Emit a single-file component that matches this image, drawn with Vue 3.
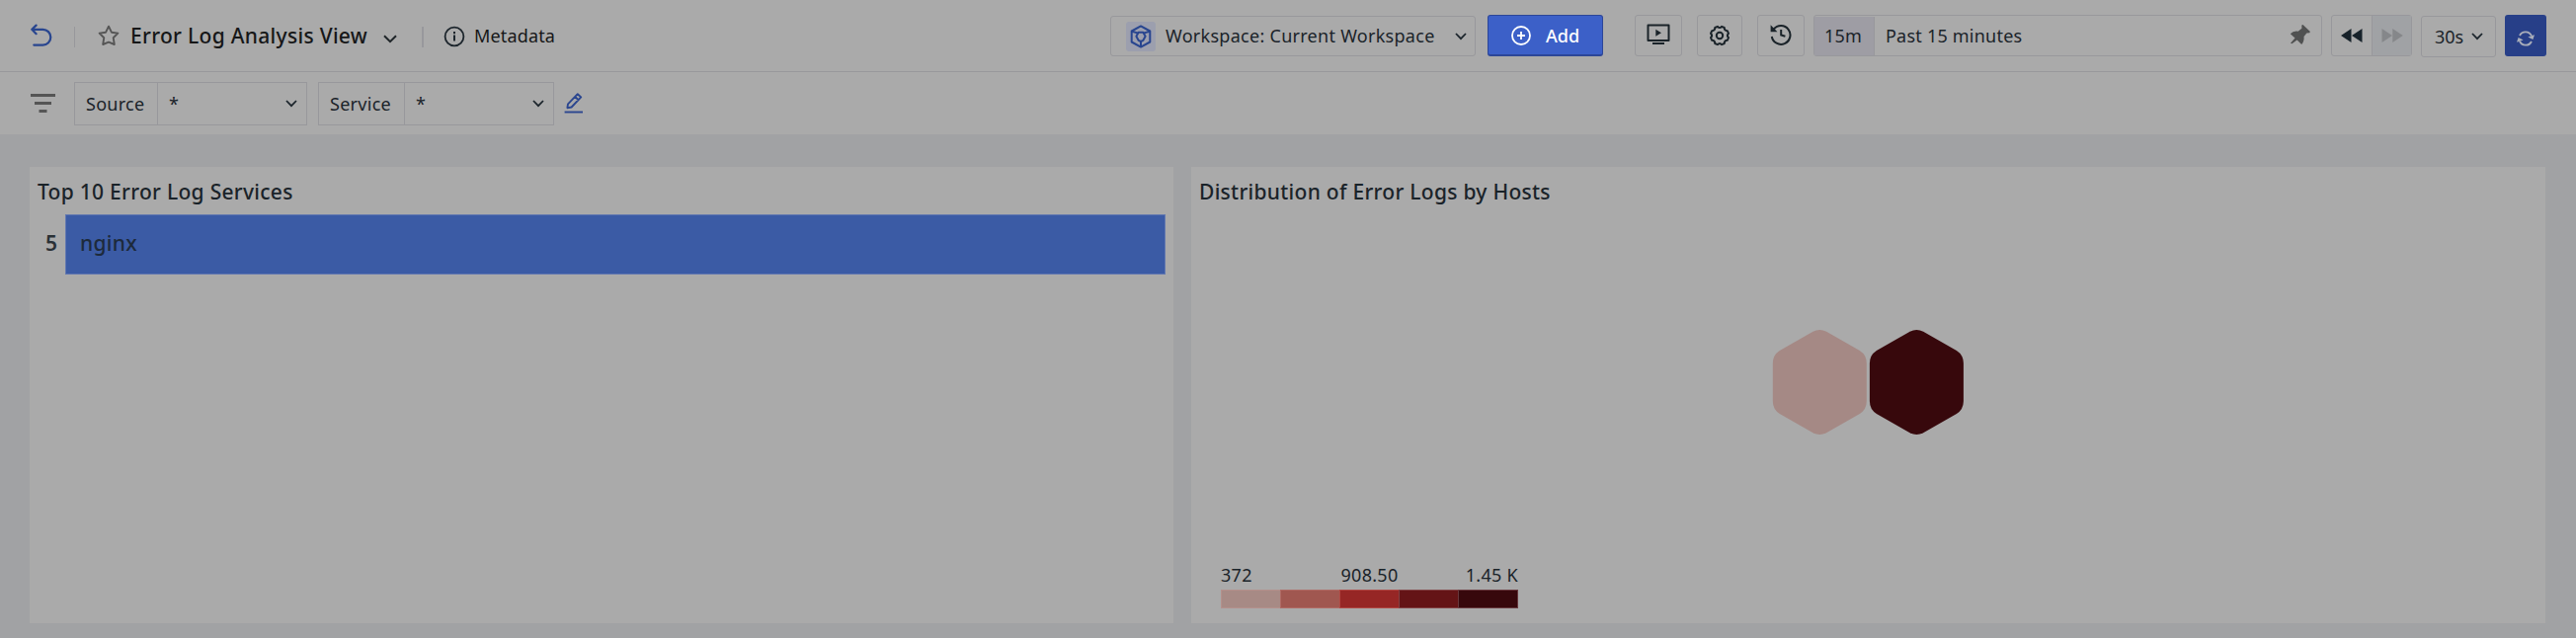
<script setup>
const legend = [
  { fill: '#a78a85', edge: '#b4908c' },
  { fill: '#a05750', edge: '#b06a64' },
  { fill: '#962625', edge: '#b04743' },
  { fill: '#641416', edge: '#814043' },
  { fill: '#37080c', edge: '#67383d' },
]
const filters = [
  { name: 'Source', value: '*', kind: 'source' },
  { name: 'Service', value: '*', kind: 'service' },
]
const services = [{ count: 5, name: 'nginx', share: 100 }]
const hex = 'M-6.8 -51.2 Q0 -54.6 6.8 -51.2 L40.5 -32 Q47.5 -27.5 47.5 -19 V19 Q47.5 27.5 40.5 32 L6.8 51.2 Q0 54.6 -6.8 51.2 L-40.5 32 Q-47.5 27.5 -47.5 19 V-19 Q-47.5 -27.5 -40.5 -32 Z'
</script>

<template>
  <div class="page">
    <header class="topbar">
      <svg class="undo" width="22" height="24" viewBox="0 0 22 24" fill="none" stroke="#28458f" stroke-width="2.2" stroke-linecap="round" stroke-linejoin="round">
        <path d="M5.6 1.6 1.3 5.8 5.6 10.2M1.8 5.8H12.4a7.9 7.9 0 0 1 0 15.8H3.3" />
      </svg>
      <i class="sep"></i>
      <svg class="star" width="22" height="22" viewBox="0 0 22 22" fill="none" stroke="#555" stroke-width="1.9" stroke-linejoin="round">
        <path d="M11 1.7 13.9 7.7 20.4 8.6 15.7 13.2 16.8 20 11 17.6 5.2 20 6.3 13.2 1.6 8.6 8.1 7.7Z" />
      </svg>
      <h1>Error Log Analysis View</h1>
      <svg class="title-chev" width="14" height="9" viewBox="0 0 14 9" fill="none" stroke="#1f2529" stroke-width="2"><path d="M1 1.2 7 7.2 13 1.2" /></svg>
      <i class="sep wide"></i>
      <svg class="info" width="22" height="22" viewBox="0 0 22 22" fill="none" stroke="#1c252c" stroke-width="1.8">
        <circle cx="11" cy="11" r="9.4" /><path d="M11 9.6V15.4M11 6V8.2" stroke-width="2" />
      </svg>
      <span class="meta">Metadata</span>

      <div class="workspace">
        <span class="cube">
          <svg width="22" height="24" viewBox="0 0 22 24" fill="none" stroke="#28458f" stroke-width="2" stroke-linejoin="round">
            <path d="M11 1.4 20.3 6.5V17.5L11 22.6 1.7 17.5V6.5Z" />
            <path d="M8.6 7.8H13.4L15.6 11.8 13.4 15.8 11 17 8.6 15.8 6.4 11.8Z" />
            <path d="M2 6.7 8.4 8.6M20 6.7 13.6 8.6M11 16.8V22.4" />
          </svg>
        </span>
        <span class="ws-text">Workspace: Current Workspace</span>
        <svg class="chev" width="12" height="8" viewBox="0 0 12 8" fill="none" stroke="#1c252c" stroke-width="1.8"><path d="M1 1 6 6.2 11 1" /></svg>
      </div>

      <button class="add">
        <svg width="20" height="20" viewBox="0 0 20 20" fill="none" stroke="#fff" stroke-width="1.8"><circle cx="10" cy="10" r="9" /><path d="M10 6V14M6 10H14" /></svg>
        <span>Add</span>
      </button>

      <button class="tool t1">
        <svg width="24" height="22" viewBox="0 0 24 22" fill="none" stroke="#1a2329" stroke-width="2" stroke-linejoin="round"><rect x="1.5" y="1.5" width="21" height="15.5" /><path d="M6 20H18" /><path d="M9.3 5.8V12.7L15 9.2Z" fill="#1a2329" stroke="none" /></svg>
      </button>
      <button class="tool t2">
        <svg width="22" height="22" viewBox="0 0 22 22" fill="none" stroke="#1a2329" stroke-width="2" stroke-linejoin="round">
          <path d="M9 1.8Q11 4.2 13 1.8L15.8 3Q15.6 6 18.8 6.2L20 9Q17.7 11 20 13L18.8 15.8Q15.6 16 15.8 19L13 20.2Q11 17.8 9 20.2L6.2 19Q6.4 16 3.2 15.8L2 13Q4.3 11 2 9L3.2 6.2Q6.4 6 6.2 3Z" />
          <circle cx="11" cy="11" r="3.2" />
        </svg>
      </button>
      <button class="tool t3">
        <svg width="22" height="22" viewBox="0 0 22 22" fill="none" stroke="#1a2329" stroke-width="2"><path d="M3.8 5.5A9.4 9.4 0 1 1 1.8 13" /><path d="M.6 1.3V8.2H7.5Z" fill="#1a2329" stroke="none" /><path d="M11.2 6V11.5L15.4 12.8" /></svg>
      </button>

      <div class="range">
        <span class="short">15m</span>
        <span class="past">Past 15 minutes</span>
        <svg class="pin" width="21" height="21" viewBox="0 0 21 21" fill="#505151"><path d="M12.3.6 13.5 0 20.9 7 20.2 8.3 17.4 8.5 14.5 12.1Q15.2 16.8 12.2 19.9L7.6 15.6 2.4 19.3 1 18.8 5.5 13.4.8 9.3Q3.7 6 8.6 6.7L12.4 3.7Z" /></svg>
      </div>

      <div class="steps">
        <span><svg width="22" height="14" viewBox="0 0 22 14" fill="#17222a"><path d="M10.5 0V14L0 7ZM21.5 0V14L11 7Z" /></svg></span>
        <span class="off"><svg width="22" height="14" viewBox="0 0 22 14" fill="#85878a"><path d="M.5 0V14L11 7ZM11.3 0V14L21.8 7Z" /></svg></span>
      </div>

      <div class="interval">
        <span>30s</span>
        <svg width="12" height="8" viewBox="0 0 12 8" fill="none" stroke="#1c252c" stroke-width="1.8"><path d="M1 1 6 6.2 11 1" /></svg>
      </div>

      <button class="refresh">
        <svg width="18" height="16" viewBox="0 0 18 16" fill="none" stroke="#a9aeba" stroke-width="1.9"><path d="M3 5A6.6 6.6 0 0 1 15 5.4M15 11A6.6 6.6 0 0 1 3 10.6" /><path d="M11.4 6.6 18 4.2 16.4 9ZM6.6 9.4 0 11.8 1.6 7Z" fill="#a9aeba" stroke="none" /></svg>
      </button>
    </header>

    <section class="filterbar">
      <svg class="funnel" width="25" height="19" viewBox="0 0 25 19" fill="#555"><path d="M0 0H25V3H0ZM4 8H21V11H4ZM8.5 16H16.5V19H8.5Z" /></svg>
      <div v-for="f in filters" :key="f.name" class="filter" :class="f.kind">
        <span class="fname">{{ f.name }}</span>
        <span class="fval">{{ f.value }}</span>
        <svg width="12" height="8" viewBox="0 0 12 8" fill="none" stroke="#1c252c" stroke-width="1.8"><path d="M1 1 6 6.2 11 1" /></svg>
      </div>
      <svg class="pencil" width="20" height="21" viewBox="0 0 20 21" fill="none" stroke="#2b468f" stroke-width="1.9" stroke-linejoin="round"><path d="M13.8 1.2 17.2 4.4 7.6 14.5 3.4 15.2 4 11.3ZM11.3 4 14.6 7.2" /><path d="M.6 19.5H19" /></svg>
    </section>

    <main class="board">
      <section class="panel services">
        <h2>Top 10 Error Log Services</h2>
        <div v-for="s in services" :key="s.name" class="row">
          <b>{{ s.count }}</b>
          <div class="track"><div class="bar" :style="{ width: s.share + '%' }">{{ s.name }}</div></div>
        </div>
      </section>
      <section class="panel hosts">
        <h2>Distribution of Error Logs by Hosts</h2>
        <svg class="honey" width="194" height="106" viewBox="0 0 194 106">
          <path :d="hex" fill="#a58985" transform="translate(48.3 53)" />
          <path :d="hex" fill="#37080c" transform="translate(146.4 53)" />
        </svg>
        <div class="legend">
          <div class="labels"><span>372</span><span>908.50</span><span>1.45 K</span></div>
          <div class="ramp"><i v-for="l in legend" :key="l.fill" :style="{ background: l.fill, borderColor: l.edge }"></i></div>
        </div>
      </section>
    </main>
  </div>
</template>

<style>
body { margin: 0; background: #a1a2a4; overflow: hidden; }
</style>

<style scoped>
* { box-sizing: border-box; }
.page {
  width: 2608px; height: 646px; display: flex; flex-direction: column;
  background: #a1a2a4; color: #1a2329;
  font: 18px/24px "Noto Sans", "Open Sans", sans-serif;
}
svg { display: block; flex: none; }
h1, h2 { margin: 0; white-space: nowrap; }
button { font: inherit; padding: 0; flex: none; display: flex; align-items: center; justify-content: center; }
span { white-space: nowrap; }

.topbar { height: 73px; flex: none; display: flex; align-items: center; background: #aaa; border-bottom: 1px solid #98989b; }
.undo { margin-left: 31px; }
.sep { width: 1px; height: 21px; margin: 2px 0 0 22px; background: #98989c; flex: none; }
.star { margin-left: 23px; }
h1 { width: 240px; margin-left: 11px; font-size: 21px; line-height: 28px; font-weight: 500; letter-spacing: 0.3px; color: #161718; }
.title-chev { margin: 7px 0 0 16px; }
.sep.wide { width: 2px; margin-left: 25px; }
.info { margin: 1px 0 0 20px; }
.meta { width: 82px; margin-left: 9px; letter-spacing: 0.15px; color: #161718; }

.workspace { width: 370px; height: 41px; margin: 1px 0 0 auto; padding-left: 15px; display: flex; align-items: center; border: 1px solid #98989c; border-radius: 3px; flex: none; }
.cube { width: 30px; height: 30px; display: flex; align-items: center; justify-content: center; border-radius: 3px; background: #9c9fae; }
.ws-text { width: 273px; margin: -2px 0 0 10px; letter-spacing: 0.28px; }
.chev { margin-left: 20px; }
.add { width: 117px; height: 42px; margin-left: 12px; justify-content: flex-start; padding-left: 23px; border: 1px solid #2c4698; border-bottom-width: 2px; border-radius: 3px; background: #3c60c8; color: #fff; font-weight: 500; }
.add span { margin-left: 15px; }
.tool { height: 42px; background: none; border: 1px solid #98989c; border-radius: 3px; }
.t1 { width: 48px; margin-left: 32px; padding-bottom: 3px; }
.t2 { width: 46px; margin-left: 15px; }
.t3 { width: 48px; margin-left: 15px; padding-bottom: 2px; }
.range { width: 515px; height: 42px; margin-left: 9px; display: flex; align-items: center; border: 1px solid #98989c; border-radius: 3px; flex: none; }
.short { width: 61px; align-self: stretch; margin-top: 1px; display: flex; align-items: center; padding: 0 0 1px 10px; letter-spacing: 0.2px; background: #9e9da4; border-right: 1px solid #98989c; }
.past { margin-left: 11px; letter-spacing: 0.22px; }
.pin { margin: 0 11px 2px auto; }
.steps { width: 82px; height: 42px; margin-left: 9px; display: flex; border: 1px solid #98989c; border-radius: 3px; flex: none; }
.steps span { width: 40px; display: flex; align-items: center; justify-content: center; }
.steps .off { background: #a0a2a5; border-left: 1px solid #98989c; }
.interval { width: 76px; height: 42px; margin: 2px 0 0 9px; display: flex; align-items: center; border: 1px solid #98989c; border-radius: 3px; flex: none; padding-left: 13px; }
.interval span { width: 30px; margin-top: -1px; }
.interval svg { margin-left: 7px; }
.refresh { width: 42px; height: 42px; margin: 0 30px 0 9px; border: 0; border-radius: 3px; background: #273f88; padding-top: 5px; }

.filterbar { height: 63px; flex: none; display: flex; align-items: center; background: #aaa; }
.funnel { margin-left: 31px; }
.filter { height: 44px; display: flex; align-items: center; border: 1px solid #98989c; }
.source { width: 236px; margin-left: 19px; }
.service { width: 239px; margin-left: 11px; }
.fname { align-self: stretch; display: flex; align-items: center; padding-left: 11px; letter-spacing: 0.28px; border-right: 1px solid #98989c; }
.source .fname { width: 84px; }
.service .fname { width: 87px; }
.fval { margin-left: 11px; }
.filter svg { margin: 0 9px 0 auto; }
.pencil { margin-left: 10px; }

.board { flex: 1; display: flex; gap: 18px; padding: 33px 31px 15px 30px; }
.panel { background: #aaa; display: flex; flex-direction: column; }
.services { width: 1158px; }
.hosts { width: 1371px; }
h2 { margin: 11px 0 0 8px; font-size: 21px; line-height: 28px; font-weight: 500; letter-spacing: 0.28px; }
.row { height: 61px; margin: 9px 8px 0 16px; display: flex; align-items: center; }
.row b { width: 20px; margin-top: -3px; font-size: 21px; font-weight: 600; color: #2a3136; }
.track { flex: 1; height: 61px; }
.bar { height: 61px; padding-left: 14px; line-height: 56px; font-size: 21px; font-weight: 500; letter-spacing: 0.3px; background: #3b5ba5; border: 1px solid #6278b0; color: #1d2a3b; }
.honey { margin: 126px 0 0 588px; }
.legend { width: 301px; margin: auto 0 15px 30px; }
.labels { display: grid; grid-template-columns: 1fr 1fr 1fr; letter-spacing: 0.3px; }
.labels span:nth-child(2) { text-align: center; }
.labels span:nth-child(3) { text-align: right; }
.ramp { display: flex; height: 19px; margin-top: 3px; }
.ramp i { flex: 1; border: 1px solid; border-right-width: 0; }
.ramp i:last-child { border-right-width: 1px; }
</style>
